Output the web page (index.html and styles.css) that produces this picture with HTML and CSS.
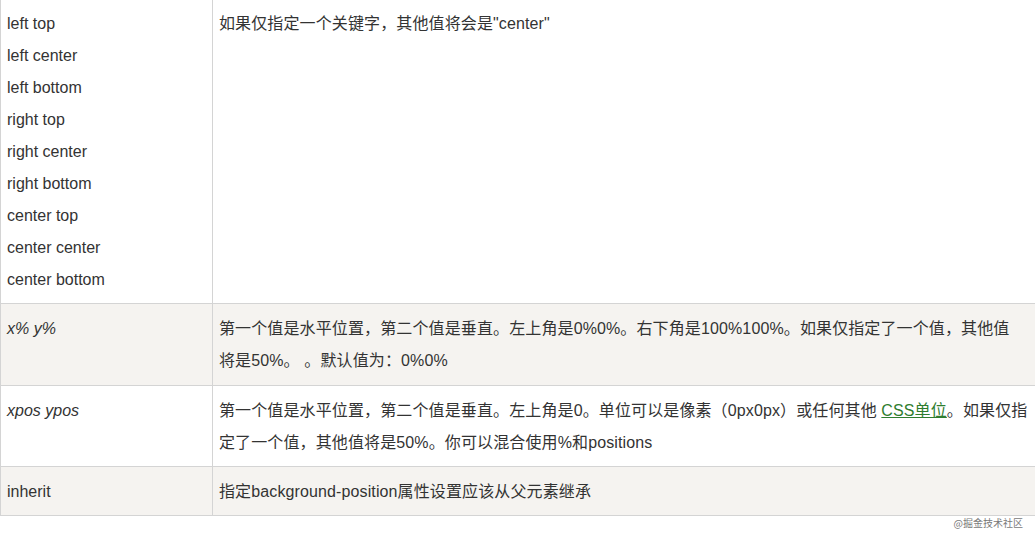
FILE: index.html
```html
<!DOCTYPE html>
<html lang="zh">
<head>
<meta charset="utf-8">
<link rel="stylesheet" href="styles.css">
</head>
<body>
<div class="page">
<table class="ref">
  <tr>
    <td class="key">left top<br>left center<br>left bottom<br>right top<br>right center<br>right bottom<br>center top<br>center center<br>center bottom</td>
    <td class="desc">如果仅指定一个关键字，其他值将会是"center"</td>
  </tr>
  <tr class="alt">
    <td class="key"><i>x% y%</i></td>
    <td class="desc">第一个值是水平位置，第二个值是垂直。左上角是0%0%。右下角是100%100%。如果仅指定了一个值，其他值<br>将是50%。 。默认值为：0%0%</td>
  </tr>
  <tr>
    <td class="key"><i>xpos ypos</i></td>
    <td class="desc">第一个值是水平位置，第二个值是垂直。左上角是0。单位可以是像素（0px0px）或任何其他 <a class="link" href="#">CSS单位</a>。如果仅指定了一个值，其他值将是50%。你可以混合使用%和positions</td>
  </tr>
  <tr class="alt">
    <td class="key">inherit</td>
    <td class="desc">指定background-position属性设置应该从父元素继承</td>
  </tr>
</table>
<div class="mark">@掘金技术社区</div>
</div>
</body>
</html>
```

FILE: styles.css
```css
html, body {
  margin: 0;
  padding: 0;
  background: #ffffff;
  overflow: hidden;
}
.page {
  width: 1035px;
  height: 539px;
  overflow: hidden;
  position: relative;
}
.ref {
  border-collapse: collapse;
  width: 1044px;
  margin-top: -2px;
  font-family: "Liberation Sans", "Noto Sans CJK SC", sans-serif;
  font-size: 16px;
  line-height: 32px;
  color: #333333;
  table-layout: fixed;
}
.ref td {
  border: 1px solid #d4d4d4;
  padding: 9px 7px 7.33px 6px;
  vertical-align: top;
}
.ref td.key {
  width: 198px;
}
.ref td.desc {
  letter-spacing: 0.12px;
}
.ref tr.alt td {
  background: #f5f3f0;
}
.link {
  color: #2f7d2f;
  text-decoration: underline;
}
.mark {
  position: absolute;
  right: 12px;
  top: 515px;
  font-family: "Noto Sans CJK SC", sans-serif;
  font-size: 10px;
  line-height: 16px;
  color: #7a7a7a;
}
```
